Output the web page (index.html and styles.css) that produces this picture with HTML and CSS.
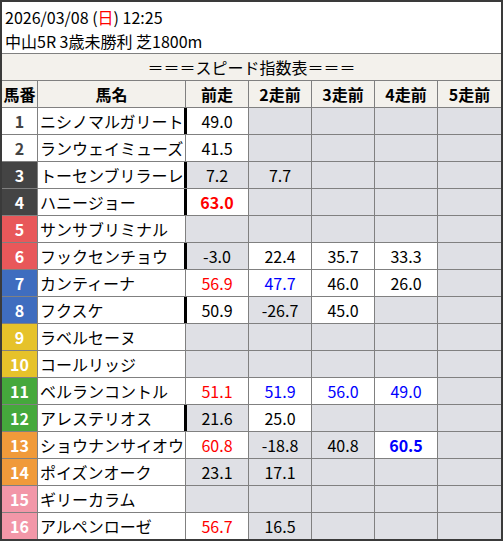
FILE: index.html
```html
<!DOCTYPE html>
<html lang="ja">
<head>
<meta charset="utf-8">
<title>スピード指数表</title>
<link rel="stylesheet" href="styles.css">
</head>
<body>
<div class="frame">
  <div class="info">
    <div class="line">2026/03/08 (<span class="sun">日</span>) 12:25</div>
    <div class="line">中山5R 3歳未勝利 芝1800m</div>
  </div>
  <div class="grid">
    <div class="c title">＝＝＝スピード指数表＝＝＝</div>
    <div class="c hd">馬番</div><div class="c hd">馬名</div><div class="c hd">前走</div><div class="c hd">2走前</div><div class="c hd">3走前</div><div class="c hd">4走前</div><div class="c hd">5走前</div>

    <div class="c no f1">1</div><div class="c nm">ニシノマルガリート</div><div class="c v mark">49.0</div><div class="c v g"></div><div class="c v g"></div><div class="c v g"></div><div class="c v g"></div>
    <div class="c no f1">2</div><div class="c nm">ランウェイミューズ</div><div class="c v">41.5</div><div class="c v g"></div><div class="c v g"></div><div class="c v g"></div><div class="c v g"></div>
    <div class="c no f2">3</div><div class="c nm">トーセンブリラーレ</div><div class="c v g mark">7.2</div><div class="c v g">7.7</div><div class="c v g"></div><div class="c v g"></div><div class="c v g"></div>
    <div class="c no f2">4</div><div class="c nm">ハニージョー</div><div class="c v mark red b">63.0</div><div class="c v g"></div><div class="c v g"></div><div class="c v g"></div><div class="c v g"></div>
    <div class="c no f3">5</div><div class="c nm">サンサブリミナル</div><div class="c v g"></div><div class="c v g"></div><div class="c v g"></div><div class="c v g"></div><div class="c v g"></div>
    <div class="c no f3">6</div><div class="c nm">フックセンチョウ</div><div class="c v g mark">-3.0</div><div class="c v">22.4</div><div class="c v">35.7</div><div class="c v">33.3</div><div class="c v g"></div>
    <div class="c no f4">7</div><div class="c nm">カンティーナ</div><div class="c v red">56.9</div><div class="c v blue">47.7</div><div class="c v">46.0</div><div class="c v">26.0</div><div class="c v g"></div>
    <div class="c no f4">8</div><div class="c nm">フクスケ</div><div class="c v mark">50.9</div><div class="c v g">-26.7</div><div class="c v">45.0</div><div class="c v g"></div><div class="c v g"></div>
    <div class="c no f5">9</div><div class="c nm">ラベルセーヌ</div><div class="c v g"></div><div class="c v g"></div><div class="c v g"></div><div class="c v g"></div><div class="c v g"></div>
    <div class="c no f5">10</div><div class="c nm">コールリッジ</div><div class="c v g"></div><div class="c v g"></div><div class="c v g"></div><div class="c v g"></div><div class="c v g"></div>
    <div class="c no f6">11</div><div class="c nm">ベルランコントル</div><div class="c v red">51.1</div><div class="c v blue">51.9</div><div class="c v blue">56.0</div><div class="c v blue">49.0</div><div class="c v g"></div>
    <div class="c no f6">12</div><div class="c nm">アレステリオス</div><div class="c v g mark">21.6</div><div class="c v">25.0</div><div class="c v g"></div><div class="c v g"></div><div class="c v g"></div>
    <div class="c no f7">13</div><div class="c nm">ショウナンサイオウ</div><div class="c v red">60.8</div><div class="c v g">-18.8</div><div class="c v g">40.8</div><div class="c v blue b">60.5</div><div class="c v g"></div>
    <div class="c no f7">14</div><div class="c nm">ポイズンオーク</div><div class="c v g">23.1</div><div class="c v g">17.1</div><div class="c v g"></div><div class="c v g"></div><div class="c v g"></div>
    <div class="c no f8">15</div><div class="c nm">ギリーカラム</div><div class="c v g"></div><div class="c v g"></div><div class="c v g"></div><div class="c v g"></div><div class="c v g"></div>
    <div class="c no f8">16</div><div class="c nm">アルペンローゼ</div><div class="c v red">56.7</div><div class="c v g">16.5</div><div class="c v g"></div><div class="c v g"></div><div class="c v g"></div>
  </div>
</div>
</body>
</html>
```

FILE: styles.css
```css
html, body {
  margin: 0;
  padding: 0;
  background: #fff;
}
body {
  font-family: "Noto Sans CJK JP", "Noto Sans", sans-serif;
  font-size: 16px;
  color: #000;
}
.frame {
  width: 499px;
  border: 2px solid #3a3a3a;
  background: #fff;
}
.info {
  padding: 3px 0 0 3px;
  height: 48px;
  border-bottom: 1px solid #808080;
}
.line {
  line-height: 24px;
  height: 24px;
  white-space: nowrap;
}
.sun {
  color: #ff0000;
}
.grid {
  display: grid;
  grid-template-columns: 35px 147px 62px 62px 62px 62px 63px;
  grid-auto-rows: 26px;
  gap: 1px;
  background: #808080;
}
.c {
  display: flex;
  align-items: center;
  justify-content: center;
  background: #fff;
  white-space: nowrap;
  overflow: hidden;
  line-height: 1;
}
.title {
  grid-column: 1 / -1;
  background: #f3f1ec;
}
.hd {
  background: #f3f1ec;
  font-weight: bold;
}
.no {
  font-weight: bold;
  color: #fff;
}
.f1 { background: #fff; color: #444; }
.f2 { background: #444444; }
.f3 { background: #e8585a; }
.f4 { background: #3f6dbf; }
.f5 { background: #e6c22a; }
.f6 { background: #45a83c; }
.f7 { background: #f09a3a; }
.f8 { background: #f297a8; }
.nm {
  justify-content: flex-start;
  padding-left: 2px;
}
.v {
  background: #fff;
}
.v.g {
  background: #dfe0e5;
}
.mark {
  box-shadow: -2px 0 0 #000, inset 1px 0 0 #000;
}
.red { color: #ff0000; }
.blue { color: #0000ff; }
.b { font-weight: bold; }
```
